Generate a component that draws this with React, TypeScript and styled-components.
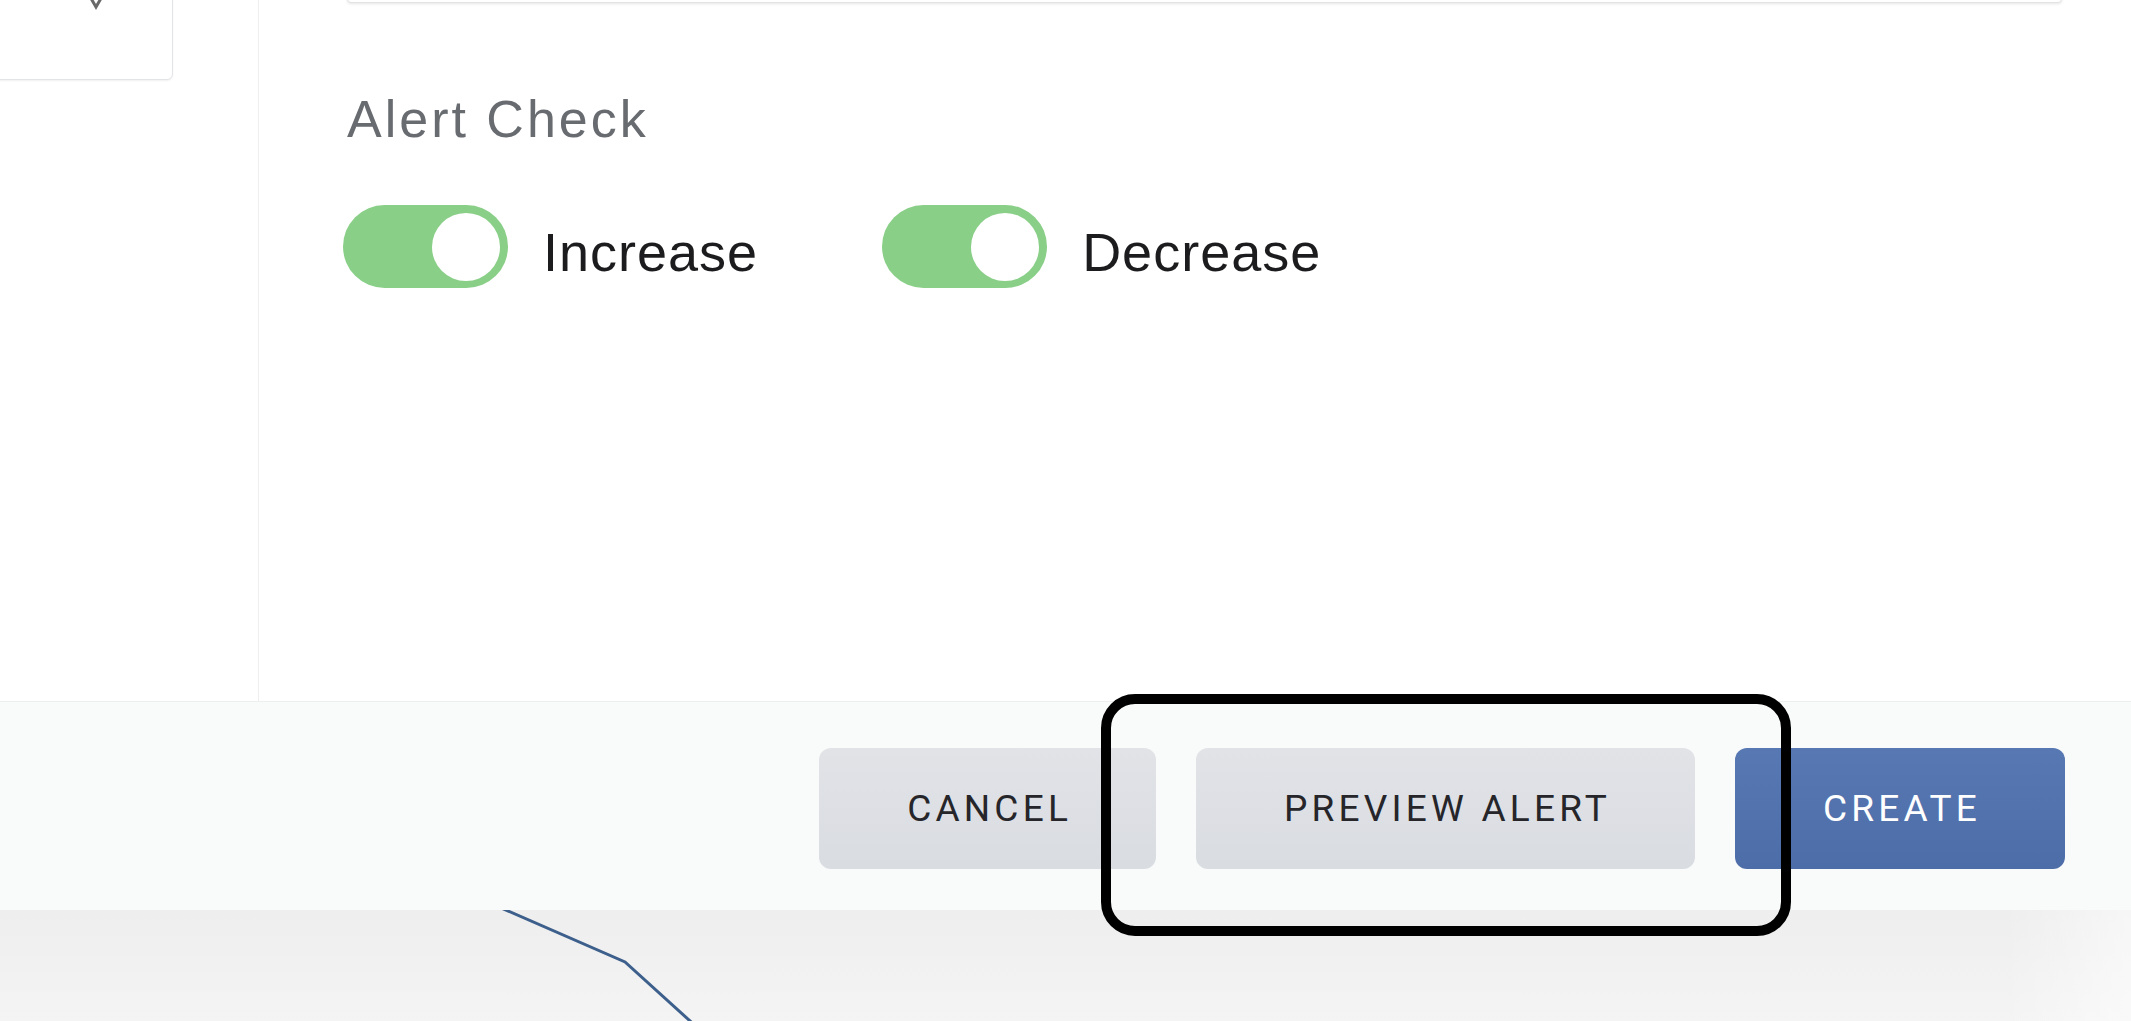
import React from "react";
import styled, { createGlobalStyle } from "styled-components";

const GlobalStyle = createGlobalStyle`
  html, body {
    margin: 0;
    padding: 0;
    background: #ffffff;
    overflow: hidden;
  }
  body {
    font-family: "Liberation Sans", Arial, sans-serif;
  }
  * { box-sizing: border-box; }
`;

const Page = styled.div`
  width: 2131px;
  height: 1021px;
  display: flex;
  flex-direction: column;
  overflow: hidden;
  background: #ffffff;
`;

const Main = styled.div`
  display: flex;
  height: 701px;
  flex: none;
`;

const LeftPane = styled.aside`
  width: 259px;
  flex: none;
  border-right: 1px solid #eeeeee;
  display: flex;
  flex-direction: column;
  overflow: hidden;
`;

const SelectCard = styled.div`
  width: 203px;
  height: 180px;
  margin-top: -100px;
  margin-left: -30px;
  border: 1px solid #e3e4e6;
  border-radius: 6px;
  box-shadow: 0 1px 2px rgba(0, 0, 0, 0.06);
  background: #ffffff;
  display: flex;
  align-items: flex-end;
  padding: 0 0 69px 114px;
`;

const RightPane = styled.section`
  flex: 1;
  display: flex;
  flex-direction: column;
  padding: 0 69px 0 88px;
`;

const InputStub = styled.div`
  height: 60px;
  margin-top: -57px;
  border: 1px solid #e2e3e5;
  border-radius: 4px;
  box-shadow: 0 1px 3px rgba(0, 0, 0, 0.1);
  background: #ffffff;
`;

const SectionLabel = styled.div`
  margin-top: 86px;
  font-size: 52px;
  line-height: 60px;
  letter-spacing: 3px;
  color: #686c70;
`;

const ToggleRow = styled.div`
  margin-top: 56px;
  margin-left: -4px;
  display: flex;
  align-items: center;
  gap: 124px;
`;

const ToggleItem = styled.label`
  display: flex;
  align-items: center;
  gap: 35px;
`;

const Track = styled.span<{ $on: boolean }>`
  width: 165px;
  height: 83px;
  border-radius: 42px;
  background: ${(p) => (p.$on ? "#8acf88" : "#d5d8dc")};
  display: flex;
  align-items: center;
  justify-content: ${(p) => (p.$on ? "flex-end" : "flex-start")};
  padding: 0 8px;
`;

const Knob = styled.span`
  width: 68px;
  height: 68px;
  border-radius: 50%;
  background: #ffffff;
`;

const ToggleText = styled.span`
  font-size: 54px;
  line-height: 62px;
  letter-spacing: 1px;
  padding-top: 11px;
  color: #1c1c1e;
`;

const Footer = styled.footer`
  height: 209px;
  flex: none;
  border-top: 1px solid #eceeef;
  background: #f9fafa;
  display: flex;
  align-items: center;
  justify-content: flex-end;
  gap: 40px;
  padding: 4px 66px 0 0;
`;

const Button = styled.button<{ $primary?: boolean }>`
  height: 121px;
  padding: 0 84px 0 88px;
  border: none;
  border-radius: 12px;
  font-family: Roboto, "Liberation Sans", sans-serif;
  font-weight: 400;
  font-size: 37px;
  letter-spacing: 4.2px;
  text-transform: uppercase;
  cursor: pointer;
  color: ${(p) => (p.$primary ? "#ffffff" : "#25252a")};
  background: ${(p) =>
    p.$primary
      ? "linear-gradient(180deg, #5778b2 0%, #4d6da8 100%)"
      : "linear-gradient(180deg, #e1e3e7 0%, #d9dce1 100%)"};
`;

const Highlighted = styled.div`
  position: relative;
  display: flex;
`;

const Annotation = styled.span`
  position: absolute;
  top: -54px;
  left: -95px;
  right: -96px;
  bottom: -67px;
  border: 10px solid #000000;
  border-radius: 34px;
  pointer-events: none;
  z-index: 2;
`;

const ChartArea = styled.div`
  flex: 1;
  background: linear-gradient(90deg, rgba(255,255,255,0) 0%, rgba(255,255,255,0) 94%, rgba(255,255,255,0.5) 100%),
    linear-gradient(180deg, #eeeeee 0%, #f4f4f4 100%);
  display: flex;
`;

const ChartSvg = styled.svg`
  width: 100%;
  height: 100%;
  display: block;
`;

export default function App() {
  return (
    <Page>
      <GlobalStyle />
      <Main>
        <LeftPane>
          <SelectCard>
            <svg width="22" height="12" viewBox="0 0 22 12">
              <polyline
                points="0,-10 11,9 22,-10"
                fill="none"
                stroke="#6a6a6a"
                strokeWidth="3"
                strokeLinejoin="miter"
              />
            </svg>
          </SelectCard>
        </LeftPane>
        <RightPane>
          <InputStub />
          <SectionLabel>Alert Check</SectionLabel>
          <ToggleRow>
            <ToggleItem>
              <Track $on>
                <Knob />
              </Track>
              <ToggleText>Increase</ToggleText>
            </ToggleItem>
            <ToggleItem>
              <Track $on>
                <Knob />
              </Track>
              <ToggleText>Decrease</ToggleText>
            </ToggleItem>
          </ToggleRow>
        </RightPane>
      </Main>
      <Footer>
        <Button>Cancel</Button>
        <Highlighted>
          <Button>Preview Alert</Button>
          <Annotation />
        </Highlighted>
        <Button $primary>Create</Button>
      </Footer>
      <ChartArea>
        <ChartSvg viewBox="0 0 2131 111" preserveAspectRatio="none">
          <polyline
            points="492,-6 625,52 700,120"
            fill="none"
            stroke="#3d5f8c"
            strokeWidth="3"
          />
        </ChartSvg>
      </ChartArea>
    </Page>
  );
}
